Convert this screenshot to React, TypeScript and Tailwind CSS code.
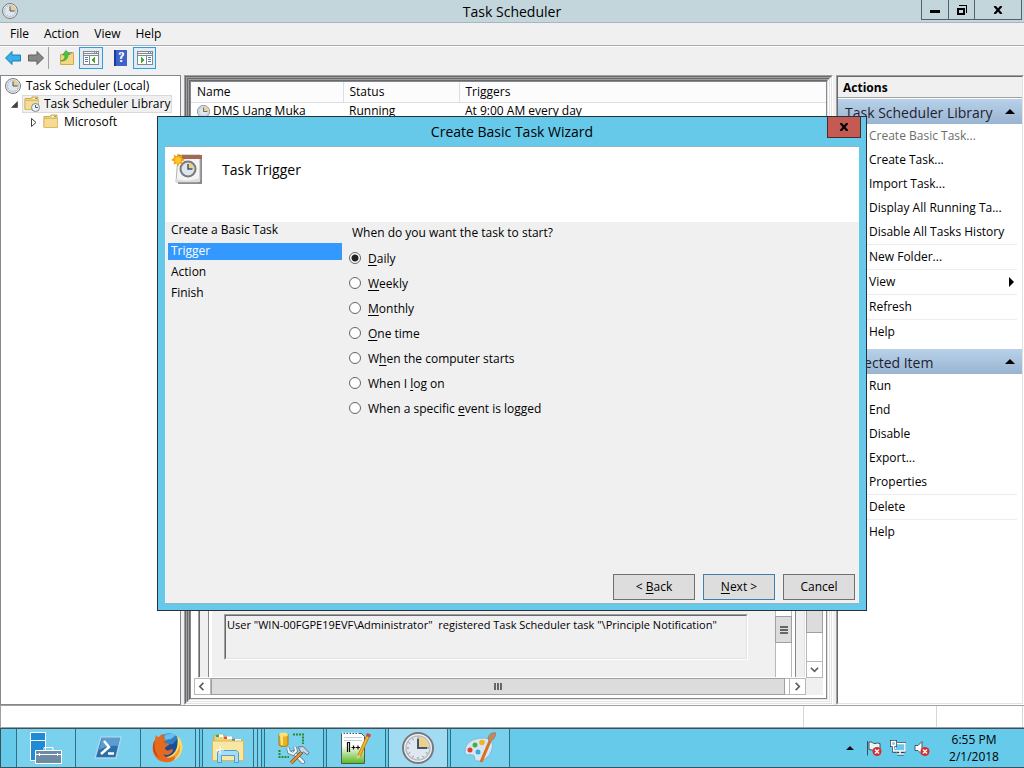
import { Fragment, ReactNode, useState } from 'react';

interface ActionItem {
  label: string;
  disabled?: boolean;
  submenu?: boolean;
  separated?: boolean;
}

interface TriggerOption {
  id: string;
  before: string;
  accessKey: string;
  after: string;
}

const LIBRARY_ACTIONS: ActionItem[] = [
  { label: 'Create Basic Task...', disabled: true },
  { label: 'Create Task...' },
  { label: 'Import Task...' },
  { label: 'Display All Running Ta...' },
  { label: 'Disable All Tasks History' },
  { label: 'New Folder...', separated: true },
  { label: 'View', submenu: true, separated: true },
  { label: 'Refresh', separated: true },
  { label: 'Help', separated: true },
];

const ITEM_ACTIONS: ActionItem[] = [
  { label: 'Run' },
  { label: 'End' },
  { label: 'Disable' },
  { label: 'Export...' },
  { label: 'Properties' },
  { label: 'Delete', separated: true },
  { label: 'Help', separated: true },
];

const TRIGGERS: TriggerOption[] = [
  { id: 'daily', before: '', accessKey: 'D', after: 'aily' },
  { id: 'weekly', before: '', accessKey: 'W', after: 'eekly' },
  { id: 'monthly', before: '', accessKey: 'M', after: 'onthly' },
  { id: 'once', before: '', accessKey: 'O', after: 'ne time' },
  { id: 'startup', before: 'W', accessKey: 'h', after: 'en the computer starts' },
  { id: 'logon', before: 'When I ', accessKey: 'l', after: 'og on' },
  { id: 'event', before: 'When a specific ', accessKey: 'e', after: 'vent is logged' },
];

const STEPS = ['Create a Basic Task', 'Trigger', 'Action', 'Finish'];

function ClockIcon({ className }: { className: string }) {
  return (
    <svg viewBox="0 0 32 32" className={className} aria-hidden="true">
      <circle cx="16" cy="16" r="15" fill="#f4f4f4" stroke="#77797c" strokeWidth="2" />
      <circle cx="16" cy="16" r="12" fill="#dfe8f0" stroke="#b5bcc4" strokeWidth="1.5" />
      <path d="M16 16V5a11 11 0 0 1 11 11z" fill="#f0cf86" />
      <path d="M16 5v2M16 25v2M5 16h2M25 16h2M10.500 6.500l1 1.700M21.500 25.500l-1-1.700M6.500 10.500l1.700 1M6.500 21.500l1.700-1M10.500 25.500l1-1.700M25.500 21.500l-1.700-1" stroke="#7d8a99" strokeWidth="1" />
      <path d="M16 7v9h9" fill="none" stroke="#42566e" strokeWidth="2" />
    </svg>
  );
}

function FolderIcon({ clock }: { clock?: boolean }) {
  return (
    <svg viewBox="0 0 16 16" className="size-4 shrink-0" aria-hidden="true">
      <path d="M1 2.500h6l1-1.500h6v12H1z" fill="#f0d27c" stroke="#d0a850" strokeWidth="1" />
      <path d="M9 2h4v1H9z" fill="#fff" />
      <path d="M11 2h2v1h-2z" fill="#4aa3dc" />
      <path d="M1 4.500h13.500v9H1z" fill="#f5dc95" stroke="#dcb964" strokeWidth="1" />
      {clock && (
        <>
          <circle cx="11.500" cy="11.500" r="4" fill="#edf2f6" stroke="#7d8890" />
          <path d="M11.500 9v2.500H14" fill="none" stroke="#4a5a6a" />
        </>
      )}
    </svg>
  );
}

function ArrowIcon({ forward }: { forward?: boolean }) {
  return (
    <svg viewBox="0 0 16 16" className="size-4" aria-hidden="true">
      {forward ? (
        <path d="M15.500 8L9 1.500V5H.500v6H9v3.500z" fill="#868686" stroke="#5e5e5e" />
      ) : (
        <path d="M.500 8L7 1.500V5h8.500v6H7v3.500z" fill="#38aeea" stroke="#1c7fb8" />
      )}
    </svg>
  );
}

function UpFolderIcon() {
  return (
    <svg viewBox="0 0 16 16" className="size-4" aria-hidden="true">
      <path d="M1.500 4.500h6l1-2h6v12h-13z" fill="#f2d684" stroke="#cfa850" />
      <path d="M10 3h3" stroke="#3d9ad8" />
      <path d="M2 11c3.500-1 4-3 4-6H3.500L7 .500 11 4.500H9c0 4-2 6.500-7 6.500z" fill="#4cc63c" stroke="#2c8f22" strokeWidth=".6" />
    </svg>
  );
}

function PaneIcon({ right }: { right?: boolean }) {
  return (
    <svg viewBox="0 0 16 14" className="h-[14px] w-4" shapeRendering="crispEdges" aria-hidden="true">
      <path d="M0 0h16v14H0z" fill="#85888c" />
      <path d="M1 1h10v1H1zM12 1h1v1h-1zM14 1h1v1h-1zM1 3h14v1H1z" fill="#f2f4f6" />
      {right ? (
        <>
          <path d="M1 5h8v8H1zM10 5h5v8h-5z" fill="#fff" />
          <path d="M4 6l4 3-4 3z" fill="#3cae2c" />
          <path d="M11 6h3v1h-3zM11 8h3v1h-3zM11 10h3v1h-3z" fill="#4e79ad" />
        </>
      ) : (
        <>
          <path d="M1 5h5v8H1zM7 5h8v8H7z" fill="#fff" />
          <path d="M12 6L8 9l4 3z" fill="#3cae2c" />
          <path d="M2 6h3v1H2zM2 8h3v1H2zM2 10h3v1H2z" fill="#4e79ad" />
        </>
      )}
    </svg>
  );
}

function WizardIcon() {
  return (
    <svg viewBox="0 0 32 32" className="size-8" aria-hidden="true">
      <path d="M7 3h24v28H7z" fill="#8b8b8b" />
      <path d="M7 2h22v25l-3 2H5z" fill="#f4f4f4" stroke="#b4b4b4" />
      <path d="M7 2h24v4H7z" fill="#a06a55" />
      <path d="M5 26c5 2 17 2 24-1v4H5z" fill="#dcdcdc" />
      <circle cx="17" cy="16" r="7.500" fill="#dde6ee" stroke="#77797c" strokeWidth="2" />
      <path d="M17 16v-6a6 6 0 0 1 6 6z" fill="#f0cf86" />
      <path d="M17 11v5h4.500" fill="none" stroke="#42566e" strokeWidth="1.500" />
      <path d="M7 0l1.300 3.200L11.500 1.500l-.8 3.300L14 7l-3.300 1.400.8 3.400-3.200-1.500L7 14l-1.300-3.700-3.200 1.500.8-3.400L0 7l3.300-2.200-.8-3.300 3.200 1.700z" fill="#f5a012" />
      <circle cx="7" cy="7" r="3" fill="#ffc928" />
    </svg>
  );
}

function ServerManagerIcon() {
  return (
    <svg viewBox="0 0 32 32" className="size-8" aria-hidden="true">
      <path d="M.500.500h15v28H.500z" fill="#1f8ad6" stroke="#fff" />
      <path d="M0 8.500h16" stroke="#fff" />
      <path d="M5.500 18.500h26v13h-26z" fill="#6d8ba3" stroke="#fff" />
      <path d="M14 18v-2.500h9V18M6 22.500h25M9.500 21v3M27.500 21v3" fill="none" stroke="#fff" />
    </svg>
  );
}

function PowerShellIcon() {
  return (
    <svg viewBox="0 0 32 32" className="size-8" aria-hidden="true">
      <path d="M9 5h20l-5 21H3z" fill="#2c70a8" stroke="#a9d5ef" strokeWidth="1.500" />
      <path d="M10 6h18l-2 8C18 13 12 15 7 18z" fill="#5c9dcf" />
      <path d="M12 9l5 6-8 7" fill="none" stroke="#fff" strokeWidth="2.500" />
      <path d="M16 21.500h6" stroke="#fff" strokeWidth="2.500" />
    </svg>
  );
}

function FirefoxIcon() {
  return (
    <svg viewBox="0 0 32 32" className="size-8" aria-hidden="true">
      <circle cx="17" cy="15" r="13" fill="#1c4c96" />
      <path d="M9 5c4-5 13-5 17 1l-5 6-9 1z" fill="#2f7fc4" />
      <path d="M12 4c3-3 8-3 12-1l-5 4-6 1z" fill="#6dbde8" />
      <path d="M25 4c6 4 7 13 3 19-5 8-17 9-24 1 9 4 19 0 21-9 .7-4 1-7 0-11z" fill="#fae062" />
      <path d="M28 12c1 7-1 12-7 16-5 3-11 3-16-1 8 1 13-1 17-4 3-3 5-6 6-11z" fill="#f3a23c" />
      <path d="M4 2c0 2 1 3 3 3 1-1 2-3 4-3 0 2 0 3 1 4l2 3-3 2c2 0 5 0 6 1 0 2-3 2-4 4 0 3 4 3 7 1 1 0 1 2 0 3-2 3-6 4-9 2 3 5 8 4 12 2 1 4-4 7-10 6C1 29-2 16 3 8z" fill="#e66a1d" />
      <path d="M3 8c-1 6-1 12 5 18-7-3-9-12-5-18z" fill="#c5401b" />
    </svg>
  );
}

function ExplorerIcon() {
  return (
    <svg viewBox="0 0 32 32" className="size-8" aria-hidden="true">
      <path d="M2 3h10l2 3h8l1 2h7v20H2z" fill="#ecd27c" stroke="#c9a448" />
      <path d="M4 2.500h7V5H4zM12 4.500h8V7h-8zM20 7h9v2h-9z" fill="#fff" />
      <path d="M4 2.500h3V5H4z" fill="#22b14c" />
      <path d="M12 4.500h3V7h-3z" fill="#e0512c" />
      <path d="M20 7h3v2h-3z" fill="#2c8fdc" />
      <path d="M.500 9h31v19.500H.500z" fill="#f8e7a2" stroke="#d9b75b" />
      <path d="M5.500 30.500v-10l2-2h17l2 2v10h-4v-7h-13v7z" fill="#a6dcf5" stroke="#4c9fd0" />
      <path d="M8 14v8M4 18h8" stroke="#fff" />
    </svg>
  );
}

function ToolsIcon() {
  return (
    <svg viewBox="0 0 32 32" className="size-8" aria-hidden="true">
      <path d="M1 2h9v11c-2 2-7 2-9 0z" fill="#e9b21e" stroke="#a97a08" />
      <path d="M2 3h3v10H3z" fill="#fbe58a" />
      <ellipse cx="5.500" cy="2.500" rx="4.500" ry="2" fill="#fbe07c" />
      <path d="M15 2.500h10V12M1.500 18v7H11" fill="none" stroke="#2c8a2c" strokeWidth="2" strokeDasharray="2 1" />
      <path d="M15 20l10 10" stroke="#5e7890" strokeWidth="4" strokeLinecap="round" />
      <path d="M15 20l10 10" stroke="#f2f6fa" strokeWidth="2.500" strokeLinecap="round" />
      <path d="M10 16l1 4 4 2 3-3-1-4" fill="none" stroke="#5e7890" strokeWidth="3.500" />
      <path d="M10 16l1 4 4 2 3-3-1-4" fill="none" stroke="#f2f6fa" strokeWidth="2" />
      <path d="M24 20L13 31" stroke="#8a4f12" strokeWidth="3.500" />
      <path d="M24 20L13 31" stroke="#e09a3a" strokeWidth="2" />
      <path d="M20 15l5-.500 6 6-1.500 2.500-4-3-2 1z" fill="#cdd7df" stroke="#63737f" />
    </svg>
  );
}

function NotepadIcon() {
  return (
    <svg viewBox="0 0 32 32" className="size-8" aria-hidden="true">
      <defs>
        <linearGradient id="npp" x1="0" y1="0" x2="0" y2="1">
          <stop offset="0.400" stopColor="#fff" />
          <stop offset="1" stopColor="#57b91b" />
        </linearGradient>
      </defs>
      <path d="M1.500 1.500h20l3 3v27h-23z" fill="url(#npp)" stroke="#555" />
      <path d="M2 1.500h18" stroke="#fff" strokeWidth="2" strokeDasharray="1.500 1.500" />
      <path d="M4 5.500h18M4 8.500h18" stroke="#c5cfd8" />
      <path d="M7.500 20v-9.500h2V20M11.500 15.500h4M13.500 13.500v4M16 15.500h4M18 13.500v4" fill="none" stroke="#111" strokeWidth="1.200" />
      <path d="M28 4L19 24" stroke="#b77708" strokeWidth="3.500" />
      <path d="M28 4L19 24" stroke="#f5b52a" strokeWidth="2" />
      <path d="M17.500 23l3 1.500-3.500 3z" fill="#e8c99a" />
      <path d="M27 1l4 1.500-1 3L26 4z" fill="#d2453a" />
    </svg>
  );
}

function PaintIcon() {
  return (
    <svg viewBox="0 0 32 32" className="size-8" aria-hidden="true">
      <path d="M1 19C1 10 10 6 19 6c7 0 11 4 9 11-2 8-9 13-15 12-4-1-1-5-4-6-4-1-8 2-8-4z" fill="#d3e7f5" stroke="#8ab4d2" />
      <circle cx="6" cy="18" r="2.500" fill="#e0402c" />
      <circle cx="11" cy="13" r="2.500" fill="#46b13c" />
      <circle cx="18" cy="10.500" r="2.800" fill="#f6b221" />
      <circle cx="14" cy="20" r="2.500" fill="#3fa7dc" />
      <path d="M26 9l-9 21" stroke="#d8701c" strokeWidth="3" />
      <path d="M24 6c1-4 4-6 8-5-1 5-3 8-7 8z" fill="#c28a5c" stroke="#95603a" strokeWidth=".5" />
    </svg>
  );
}

function TrayBadge() {
  return (
    <>
      <circle cx="11" cy="11.500" r="4.500" fill="#d92b2b" />
      <path d="M9 9.500l4 4M13 9.500l-4 4" stroke="#fff" strokeWidth="1.500" />
    </>
  );
}

// Classic sunken Win32 edge: two one-pixel rings, dark on top/left, light on bottom/right
function Sunken({ className = '', children }: { className?: string; children?: ReactNode }) {
  return (
    <div className="flex min-h-0 min-w-0 flex-1 flex-col border border-t-[#a0a0a0] border-r-white border-b-white border-l-[#a0a0a0]">
      <div
        className={`flex min-h-0 flex-1 flex-col border border-t-[#696969] border-r-[#e3e3e3] border-b-[#e3e3e3] border-l-[#696969] ${className}`}
      >
        {children}
      </div>
    </div>
  );
}

function Chevron({ direction }: { direction: 'left' | 'right' | 'down' }) {
  const d = { left: 'M6 1L2 5l4 4', right: 'M3 1l4 4-4 4', down: 'M1 3l4 4 4-4' }[direction];
  return (
    <svg viewBox="0 0 10 10" className="size-[9px]" aria-hidden="true">
      <path d={d} fill="none" stroke="#5a5a5a" strokeWidth="1.800" />
    </svg>
  );
}

function CloseGlyph() {
  return (
    <svg viewBox="0 0 10 8" className="h-2 w-[10px]" aria-hidden="true">
      <path d="M1.500 0l7 8M8.500 0l-7 8" stroke="#000" strokeWidth="2.200" />
    </svg>
  );
}

function TitleBar() {
  return (
    <header className="relative flex h-[23px] shrink-0 items-center justify-center border-b border-[#a9b5c3] bg-[#c3d6dc]">
      <ClockIcon className="absolute top-[3px] left-[2px] size-4" />
      <h1 className="text-[14px] leading-[23px]">Task Scheduler</h1>
      <div className="absolute top-0 right-[2px] flex h-5 border border-t-0 border-[#52616b]">
        <button aria-label="Minimize" className="flex w-[27px] items-center justify-center border-r border-[#52616b]">
          <span className="mt-1 h-[3px] w-[10px] bg-black" />
        </button>
        <button aria-label="Restore" className="flex w-[26px] items-center justify-center border-r border-[#52616b]">
          <svg viewBox="0 0 10 10" className="size-[10px]" shapeRendering="crispEdges" aria-hidden="true">
            <path d="M1 4h6v5H1z" fill="none" stroke="#000" strokeWidth="2" />
            <path d="M2 .500h7.500V8" fill="none" stroke="#000" />
          </svg>
        </button>
        <button aria-label="Close" className="flex w-[46px] items-center justify-center">
          <CloseGlyph />
        </button>
      </div>
    </header>
  );
}

function Toolbar() {
  return (
    <div className="flex h-[29px] shrink-0 items-start border-t border-white pl-[5px]">
      <button aria-label="Back" className="flex h-[22px] items-center">
        <ArrowIcon />
      </button>
      <button aria-label="Forward" className="ml-[7px] flex h-[22px] items-center">
        <ArrowIcon forward />
      </button>
      <span className="ml-1 h-[22px] w-px bg-[#a0a0a0]" />
      <button aria-label="Up one level" className="ml-[10px] flex h-[22px] items-center">
        <UpFolderIcon />
      </button>
      <button
        aria-label="Show or hide console tree"
        className="ml-1 flex h-[22px] w-6 items-center justify-center border border-[#2f9ddb] bg-[#dfecf6]"
      >
        <PaneIcon />
      </button>
      <button aria-label="Help" className="ml-[11px] flex h-[22px] items-center">
        <span className="flex h-4 w-[13px] items-center justify-center border-l-2 border-[#1c3a9c] bg-[#3f62c8] font-serif text-[14px] font-bold text-white">
          ?
        </span>
      </button>
      <button
        aria-label="Show or hide action pane"
        className="ml-[6px] flex h-[22px] w-[23px] items-center justify-center border border-[#2f9ddb] bg-[#dfecf6]"
      >
        <PaneIcon right />
      </button>
    </div>
  );
}

function ConsoleTree() {
  return (
    <nav className="w-[181px] shrink-0 border border-[#828790] bg-white pt-px">
      <div className="flex h-[18px] items-center gap-[5px] pl-1">
        <ClockIcon className="size-4" />
        Task Scheduler (Local)
      </div>
      <div className="flex h-[18px] items-center pl-[10px]">
        <svg viewBox="0 0 7 7" className="size-[7px]" aria-hidden="true">
          <path d="M6.500.500v6h-6z" fill="#404040" stroke="#262626" strokeWidth=".5" />
        </svg>
        <div className="ml-1 flex h-[18px] items-center gap-1 border border-[#dadada] bg-[#f0f0f0] pr-px pl-px">
          <FolderIcon clock />
          Task Scheduler Library
        </div>
      </div>
      <div className="flex h-[18px] items-center pl-[30px]">
        <svg viewBox="0 0 6 9" className="h-[9px] w-[6px]" aria-hidden="true">
          <path d="M.500.500L5 4.500l-4.500 4z" fill="#fff" stroke="#404040" />
        </svg>
        <span className="ml-[6px]">
          <FolderIcon />
        </span>
        <span className="ml-[5px]">Microsoft</span>
      </div>
    </nav>
  );
}

function TaskTable() {
  return (
    <table className="w-full table-fixed text-left">
      <thead>
        <tr className="h-5 border-b border-[#dedede] bg-[#fcfcfc]">
          <th className="w-[152px] border-r border-[#dedede] p-0 pl-[6px] font-normal">Name</th>
          <th className="w-[116px] border-r border-[#dedede] p-0 pl-[6px] font-normal">Status</th>
          <th className="p-0 pl-[6px] font-normal">Triggers</th>
        </tr>
      </thead>
      <tbody>
        <tr className="h-[18px]">
          <td className="p-0 pl-[6px]">
            <div className="flex items-center gap-[3px]">
              <ClockIcon className="size-[13px]" />
              DMS Uang Muka
            </div>
          </td>
          <td className="p-0 pl-[6px]">Running</td>
          <td className="p-0 pl-[6px]">At 9:00 AM every day</td>
        </tr>
      </tbody>
    </table>
  );
}

function TaskDetails() {
  return (
    <div className="mt-auto flex flex-col p-[3px]">
      <div className="flex h-[180px]">
        <div className="flex min-w-0 flex-1 pl-1">
          <Sunken className="border-b-0 bg-[#f0f0f0] px-2">
            <div className="flex flex-1 border-x border-[#828790] bg-white px-[3px]">
              <div className="flex min-w-0 flex-1 flex-col justify-end bg-[#f0f0f0] pr-[27px] pb-[17px] pl-3">
                <div className="flex h-[46px]">
                  <Sunken>
                    <p className="pl-px text-[11px] leading-[18px] whitespace-pre">
                      User "WIN-00FGPE19EVF\Administrator"  registered Task Scheduler task "\Principle Notification"
                    </p>
                  </Sunken>
                </div>
              </div>
              <div className="flex w-[17px] flex-col border-x border-[#b8b8b8] pt-[116px]">
                <div className="-mx-px flex h-[27px] flex-col items-center justify-center gap-px border border-[#a0a0a0] bg-[#dcdcdc]">
                  <span className="h-[2px] w-2 bg-[#666]" />
                  <span className="h-[2px] w-2 bg-[#666]" />
                  <span className="h-[2px] w-2 bg-[#666]" />
                </div>
              </div>
            </div>
          </Sunken>
        </div>
        <div className="flex w-[17px] flex-col border-x border-[#b8b8b8]">
          <div className="-mx-px h-[135px] border border-[#a0a0a0] bg-[#dcdcdc]" />
          <button
            aria-label="Scroll down"
            className="-mx-px mt-auto flex h-[17px] items-center justify-center border border-[#b8b8b8]"
          >
            <Chevron direction="down" />
          </button>
        </div>
      </div>
      <div className="flex h-[17px]">
        <button aria-label="Scroll left" className="flex w-[17px] items-center justify-center border border-[#b8b8b8]">
          <Chevron direction="left" />
        </button>
        <div className="flex flex-1 border-y border-[#b8b8b8] pr-1">
          <div className="-my-px flex flex-1 items-center justify-center gap-px border border-[#a0a0a0] bg-[#dcdcdc]">
            <span className="h-[7px] w-[2px] bg-[#666]" />
            <span className="h-[7px] w-[2px] bg-[#666]" />
            <span className="h-[7px] w-[2px] bg-[#666]" />
          </div>
        </div>
        <button aria-label="Scroll right" className="flex w-[17px] items-center justify-center border border-[#b8b8b8]">
          <Chevron direction="right" />
        </button>
        <div className="w-[17px] bg-[#f0f0f0]" />
      </div>
    </div>
  );
}

function ActionGroup({ title, items }: { title: string; items: ActionItem[] }) {
  return (
    <section>
      <h3 className="flex h-[25px] items-center justify-between bg-linear-to-b from-[#b9d1ea] to-[#99b4d1] pr-[7px] pl-[7px] text-[14px] text-[#1e1e2e]">
        <span className="pt-[2px]">{title}</span>
        <svg viewBox="0 0 10 5" className="h-[5px] w-[10px]" aria-hidden="true">
          <path d="M5 0l5 5H0z" fill="#000" />
        </svg>
      </h3>
      {items.map((item) => (
        <Fragment key={item.label}>
          {item.separated && <div className="mr-[5px] ml-6 h-px bg-[#ececec]" />}
          <button
            disabled={item.disabled}
            className="flex h-6 w-full items-center justify-between pr-2 pl-[31px] text-left disabled:text-[#6d6d6d]"
          >
            {item.label}
            {item.submenu && (
              <svg viewBox="0 0 5 10" className="h-[10px] w-[5px]" aria-hidden="true">
                <path d="M0 0l5 5-5 5z" fill="#000" />
              </svg>
            )}
          </button>
        </Fragment>
      ))}
    </section>
  );
}

function ActionsPane() {
  return (
    <aside className="flex w-[188px] shrink-0">
      <Sunken className="bg-white">
        <h2 className="h-[21px] shrink-0 border-b border-[#a0a0a0] bg-[#f0f0f0] pl-[5px] leading-[21px] font-bold">
          Actions
        </h2>
        <div className="flex flex-col gap-[5px] pt-px">
          <ActionGroup title="Task Scheduler Library" items={LIBRARY_ACTIONS} />
          <ActionGroup title="Selected Item" items={ITEM_ACTIONS} />
        </div>
      </Sunken>
    </aside>
  );
}

function WizardDialog() {
  const [trigger, setTrigger] = useState('daily');

  return (
    <div
      role="dialog"
      aria-labelledby="wizard-title"
      className="relative flex h-[495px] w-[710px] flex-col border border-[#25323c] bg-[#66c9ea] px-[7px] pb-[6px]"
    >
      <h2 id="wizard-title" className="h-[29px] text-center text-[14px] leading-[29px]">
        Create Basic Task Wizard
      </h2>
      <button
        aria-label="Close wizard"
        className="absolute top-0 right-[5px] flex h-[21px] w-[34px] items-center justify-center border border-t-0 border-[#4a2b2e] bg-[#c55a52]"
      >
        <CloseGlyph />
      </button>
      <div className="flex flex-1 flex-col border-y border-[#8fb6c6] bg-[#f0f0f0]">
        <div className="flex h-[75px] shrink-0 items-start gap-[19px] bg-white pt-[6px] pl-[6px]">
          <WizardIcon />
          <h3 className="pt-[7px] text-[14px] leading-5">Task Trigger</h3>
        </div>
        <div className="flex flex-1">
          <ol className="flex w-[177px] flex-col gap-1 pl-[3px]">
            {STEPS.map((step) => (
              <li
                key={step}
                className={`h-[17px] pl-[3px] leading-4 ${step === 'Trigger' ? 'bg-[#3399ff] text-white' : ''}`}
              >
                {step}
              </li>
            ))}
          </ol>
          <fieldset className="flex-1 pl-[7px]">
            <legend className="h-6 pl-[3px] leading-[22px]">When do you want the task to start?</legend>
            {TRIGGERS.map((t) => (
              <label key={t.id} className="flex h-[25px] w-fit items-center gap-[7px]">
                <input
                  type="radio"
                  name="trigger"
                  checked={trigger === t.id}
                  onChange={() => setTrigger(t.id)}
                  className="mb-[2px] size-3 appearance-none rounded-full border border-[#666] bg-white bg-clip-padding checked:bg-[radial-gradient(circle,#222_3px,white_4px)]"
                />
                <span>
                  {t.before}
                  <u className="underline-offset-2">{t.accessKey}</u>
                  {t.after}
                </span>
              </label>
            ))}
          </fieldset>
        </div>
        <div className="flex justify-end gap-2 pr-1 pb-[3px]">
          <button className="h-[26px] w-[82px] border border-[#707070] bg-[#dddddd]">
            &lt; <u className="underline-offset-2">B</u>ack
          </button>
          <button className="h-[26px] w-[72px] border border-[#3c7fb1] bg-[#dddddd]">
            <u className="underline-offset-2">N</u>ext &gt;
          </button>
          <button className="h-[26px] w-[72px] border border-[#707070] bg-[#dddddd]">Cancel</button>
        </div>
      </div>
    </div>
  );
}

function Taskbar() {
  const button = 'flex items-center justify-center border-[#2f6f86] bg-[#7ad1ee]';
  return (
    <footer className="flex h-10 shrink-0 border border-r-0 border-[#3d4f58] bg-[#66caea]">
      <div className="ml-[15px] flex">
        <button aria-label="Server Manager" className={`${button} w-[60px] border-x`}>
          <ServerManagerIcon />
        </button>
        <button aria-label="Windows PowerShell" className={`${button} w-[64px]`}>
          <PowerShellIcon />
        </button>
        <button aria-label="Firefox" className={`${button} w-[56px] border-x`}>
          <FirefoxIcon />
        </button>
        <span className="w-1 border-r border-[#2f6f86] bg-[#7ad1ee]" />
      </div>
      <div className="ml-[2px] flex">
        <button aria-label="File Explorer" className={`${button} w-[52px] border-x`}>
          <ExplorerIcon />
        </button>
        <span className="w-1 border-r border-[#2f6f86] bg-[#7ad1ee]" />
        <span className="w-1 border-r border-[#2f6f86] bg-[#7ad1ee]" />
      </div>
      <div className="ml-[2px] flex gap-[2px]">
        <button aria-label="Administrative tools" className={`${button} w-[60px] border-x`}>
          <ToolsIcon />
        </button>
        <button aria-label="Notepad++" className={`${button} w-[60px] border-x`}>
          <NotepadIcon />
        </button>
        <button
          aria-label="Task Scheduler"
          className="flex w-[60px] items-center justify-center border-x border-[#2f6f86] bg-[#a2dcf3]"
        >
          <ClockIcon className="size-8" />
        </button>
        <button aria-label="Paint" className={`${button} w-[60px] border-x`}>
          <PaintIcon />
        </button>
      </div>
      <div className="ml-auto flex items-center gap-2 pr-[18px]">
        <button aria-label="Show hidden icons" className="mr-1">
          <svg viewBox="0 0 8 4" className="h-1 w-2" aria-hidden="true">
            <path d="M4 0l4 4H0z" fill="#111" />
          </svg>
        </button>
        <svg viewBox="0 0 16 16" className="size-4" aria-hidden="true">
          <path d="M1.500 1v14.500M3 2c3-1 4 2 6 1.500S12 3 14 3.500V10c-4-1-6 1-11-.500z" fill="#e8f4fa" stroke="#3f4f58" />
          <TrayBadge />
        </svg>
        <svg viewBox="0 0 16 16" className="size-4" aria-hidden="true">
          <path d="M5 3.500h10v7.500H5zM10 11v3M7 14h7" fill="none" stroke="#28424e" strokeWidth="3" />
          <path d="M5 3.500h10v7.500H5zM10 11v3M7 14h7" fill="#66caea" stroke="#fff" strokeWidth="1.500" />
          <path d="M1.500 1.500h4v4h-4zM3.500 5.500V11H6" fill="#66caea" stroke="#28424e" strokeWidth="3" />
          <path d="M1.500 1.500h4v4h-4zM3.500 5.500V11H6" fill="#66caea" stroke="#fff" strokeWidth="1.500" />
        </svg>
        <svg viewBox="0 0 16 16" className="size-4" aria-hidden="true">
          <path d="M1 5.500h3l4-4v13l-4-4H1z" fill="#fff" stroke="#3f5a66" />
          <TrayBadge />
        </svg>
        <time className="ml-1 w-16 text-center leading-[17px]">
          6:55 PM
          <br />
          2/1/2018
        </time>
      </div>
    </footer>
  );
}

export default function App() {
  return (
    <div className="flex h-screen flex-col overflow-hidden bg-[#f0f0f0] font-['Open_Sans','Noto_Sans',sans-serif] text-[12px] leading-4 text-black">
      <div className="relative flex min-h-0 flex-1 flex-col">
        <TitleBar />
        <div className="flex h-[23px] shrink-0 items-center gap-[15px] border-b border-[#aaabb5] pl-[10px]">
          <button>File</button>
          <button>Action</button>
          <button>View</button>
          <button>Help</button>
        </div>
        <Toolbar />

        <main className="flex min-h-0 flex-1">
          <ConsoleTree />
          <section className="mx-[3px] flex min-w-0 flex-1">
            <Sunken>
              <Sunken>
                <Sunken>
                  <div className="flex min-h-0 flex-1 flex-col border border-[#828790] bg-white">
                    <TaskTable />
                    <TaskDetails />
                  </div>
                </Sunken>
              </Sunken>
            </Sunken>
          </section>
          <ActionsPane />
        </main>

        <div className="flex h-[23px] shrink-0 justify-end border border-r-0 border-[#a0a0a0] bg-white pr-px">
          <div className="w-[133px] border-l border-[#d7d7d7]" />
          <div className="w-[87px] border-x border-[#d7d7d7]" />
        </div>

        <div className="absolute inset-x-0 top-0 bottom-px flex items-center justify-center">
          <WizardDialog />
        </div>
      </div>
      <Taskbar />
    </div>
  );
}
